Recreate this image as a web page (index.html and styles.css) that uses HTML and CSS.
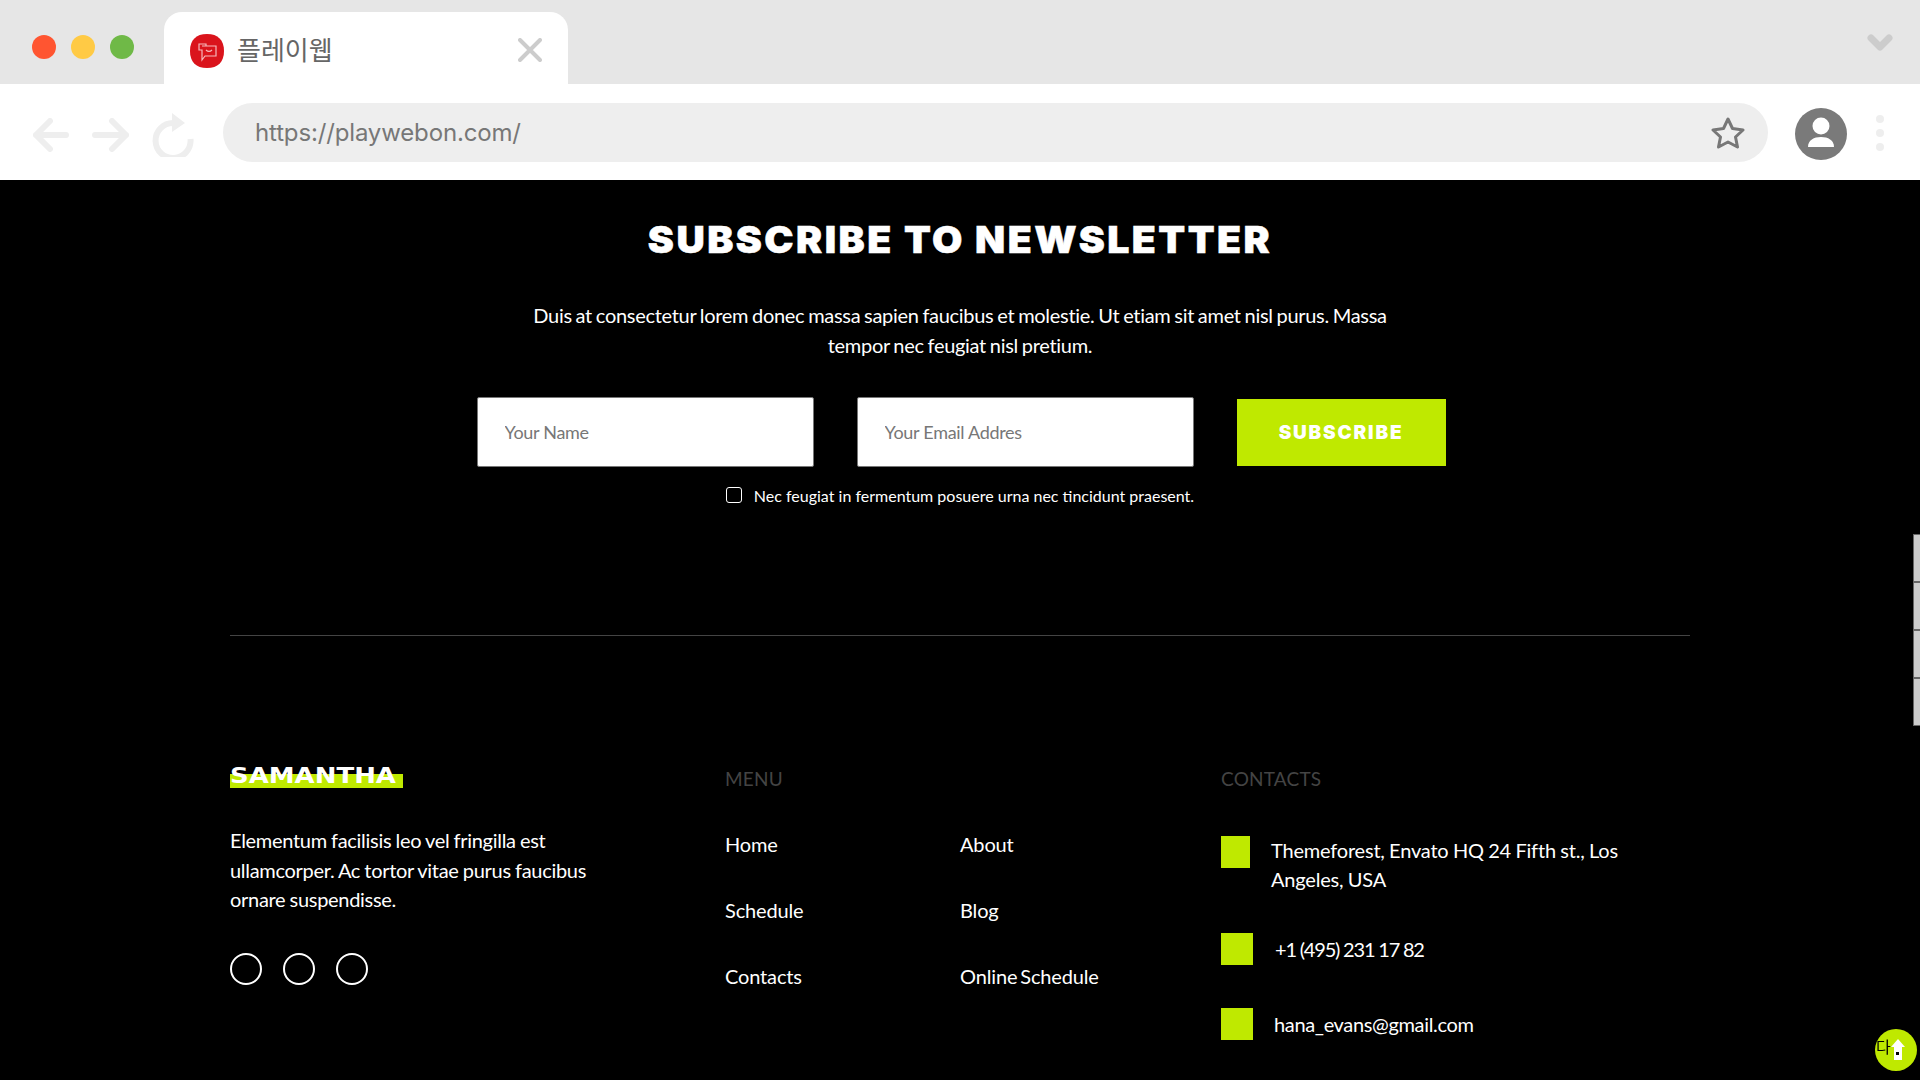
FILE: index.html
```html
<!DOCTYPE html>
<html lang="ko">
<head>
    <meta charset="UTF-8">
    <title>플레이웹</title>
    <link rel="stylesheet" href="styles.css">
</head>
<body>
    <header class="browser">
        <div class="tabstrip">
            <div class="lights">
                <span class="light red"></span>
                <span class="light yellow"></span>
                <span class="light green"></span>
            </div>
            <div class="tab">
                <svg class="favicon" width="34" height="34" viewBox="0 0 34 34">
                    <path d="M17 0C28 0 34 6 34 17S28 34 17 34 0 28 0 17 6 0 17 0Z" fill="#da141c"/>
                    <g fill="none" stroke="#f6b9bc" stroke-width="1.2">
                        <path d="M12 12H26V22H15L12 26V16H9V10H16V12"/>
                        <path d="M16 16Q19 19 22 16"/>
                    </g>
                </svg>
                <span class="tab-title">플레이웹</span>
                <svg class="tab-close" width="24" height="24" viewBox="0 0 24 24">
                    <path d="M2 2L22 22M22 2L2 22" stroke="#cccccc" stroke-width="4" stroke-linecap="round"/>
                </svg>
            </div>
            <svg class="tabs-more" width="26" height="18" viewBox="0 0 26 18">
                <path d="M4 4L13 13L22 4" fill="none" stroke="#cccccc" stroke-width="7" stroke-linecap="round" stroke-linejoin="round"/>
            </svg>
        </div>
        <div class="toolbar">
            <svg class="nav-back" width="36" height="34" viewBox="0 0 36 34">
                <path d="M17 3L3 17L17 31M3 17H33" fill="none" stroke="#eeeeee" stroke-width="6" stroke-linecap="round" stroke-linejoin="round"/>
            </svg>
            <svg class="nav-forward" width="37" height="34" viewBox="0 0 37 34">
                <path d="M20 3L34 17L20 31M34 17H3" fill="none" stroke="#eeeeee" stroke-width="6" stroke-linecap="round" stroke-linejoin="round"/>
            </svg>
            <svg class="nav-reload" width="42" height="44" viewBox="0 0 42 44">
                <path d="M21 10A17.500 17.500 0 1 0 38.500 26" fill="none" stroke="#eeeeee" stroke-width="6"/>
                <path d="M20 0L33 10L20 19Z" fill="#eeeeee"/>
            </svg>
            <div class="urlbar">
                <span class="url">https://playwebon.com/</span>
                <svg width="34" height="32" viewBox="0 0 34 32">
                    <path d="M17 2L21.500 11.500L32 13L24.500 20L26.500 30L17 25L7.500 30L9.500 20L2 13L12.500 11.500Z" fill="none" stroke="#777777" stroke-width="3" stroke-linejoin="round"/>
                </svg>
            </div>
            <svg class="avatar" width="52" height="52" viewBox="0 0 52 52">
                <circle cx="26" cy="26" r="26" fill="#7a7a7a"/>
                <circle cx="26" cy="18" r="8.500" fill="#ffffff"/>
                <path d="M13 39C13 32 19 29 26 29S39 32 39 39Z" fill="#ffffff"/>
            </svg>
            <div class="dots">
                <span></span>
                <span></span>
                <span></span>
            </div>
        </div>
    </header>

    <main class="page">
        <section class="newsletter">
            <h2>SUBSCRIBE TO NEWSLETTER</h2>
            <p class="intro">Duis at consectetur lorem donec massa sapien faucibus et molestie. Ut etiam sit amet nisl purus. Massa<br>tempor nec feugiat nisl pretium.</p>
            <form class="subscribe-form">
                <input type="text" placeholder="Your Name">
                <input type="text" placeholder="Your Email Addres">
                <button type="button">SUBSCRIBE</button>
            </form>
            <label class="agree">
                <span class="checkbox"></span>
                <span>Nec feugiat in fermentum posuere urna nec tincidunt praesent.</span>
            </label>
        </section>

        <hr class="divider">

        <footer class="footer">
            <div class="about">
                <div class="logo"><span>SAMANTHA</span></div>
                <p>Elementum facilisis leo vel fringilla est<br>ullamcorper. Ac tortor vitae purus faucibus<br>ornare suspendisse.</p>
                <div class="socials">
                    <span></span>
                    <span></span>
                    <span></span>
                </div>
            </div>
            <div class="menu">
                <h4>MENU</h4>
                <ul>
                    <li>Home</li>
                    <li>About</li>
                    <li>Schedule</li>
                    <li>Blog</li>
                    <li>Contacts</li>
                    <li>Online Schedule</li>
                </ul>
            </div>
            <div class="contacts">
                <h4>CONTACTS</h4>
                <div class="contact address">
                    <span class="marker narrow"></span>
                    <span>Themeforest, Envato HQ 24 Fifth st., Los<br>Angeles, USA</span>
                </div>
                <div class="contact phone">
                    <span class="marker"></span>
                    <span>+1 (495) 231 17 82</span>
                </div>
                <div class="contact mail">
                    <span class="marker"></span>
                    <span>hana_evans@gmail.com</span>
                </div>
            </div>
        </footer>
    </main>

    <div class="side-tabs">
        <span></span>
        <span></span>
        <span></span>
        <span></span>
    </div>

    <div class="to-top">
        <span class="to-top-text">다</span>
        <svg width="14" height="21" viewBox="0 0 14 21">
            <path d="M7 0L14 8H11V21H3V8H0Z" fill="#ffffff"/>
            <rect x="5" y="13" width="3" height="3" fill="#000000"/>
        </svg>
    </div>
</body>
</html>
```

FILE: styles.css
```css
* {
    box-sizing: border-box;
}
html, body {
    margin: 0;
    height: 1080px;
    overflow: hidden;
}
body {
    background: #000;
    color: #fff;
    font-family: "Lato", "Noto Sans CJK KR", sans-serif;
}

/* browser frame */
.browser {
    height: 180px;
    background: #fff;
}
.tabstrip {
    height: 84px;
    background: #e6e6e6;
    display: flex;
    align-items: flex-end;
    position: relative;
}
.lights {
    display: flex;
    gap: 15px;
    padding: 0 0 25px 32px;
    width: 164px;
}
.light {
    width: 24px;
    height: 24px;
    border-radius: 50%;
}
.red { background: #ff5531; }
.yellow { background: #ffca45; }
.green { background: #6fb947; }
.tab {
    width: 404px;
    height: 72px;
    background: #fff;
    border-radius: 18px 18px 0 0;
    display: flex;
    align-items: center;
    padding: 0 26px 0 26px;
}
.favicon {
    margin: 6px 13px 0 0;
}
.tab-title {
    font-family: "Noto Sans CJK KR", sans-serif;
    font-size: 26px;
    color: #666;
    flex: 1;
}
.tab-close {
    margin-top: 3px;
}
.tabs-more {
    position: absolute;
    right: 27px;
    top: 34px;
}
.toolbar {
    height: 96px;
    display: flex;
    align-items: center;
    padding-left: 33px;
}
.nav-back {
    margin-top: 6px;
}
.nav-forward {
    margin: 6px 0 0 23px;
}
.nav-reload {
    margin: 6px 0 0 23px;
}
.urlbar {
    width: 1545px;
    height: 59px;
    margin: 1px 0 0 29px;
    background: #eee;
    border-radius: 30px;
    display: flex;
    align-items: center;
    justify-content: space-between;
    padding: 0 23px 0 32px;
}
.url {
    font-family: "Inter", sans-serif;
    font-size: 24px;
    letter-spacing: -0.15px;
    color: #777;
}
.avatar {
    margin: 4px 0 0 27px;
}
.dots {
    display: flex;
    flex-direction: column;
    gap: 6px;
    margin: 2px 0 0 29px;
}
.dots span {
    width: 8px;
    height: 8px;
    border-radius: 50%;
    background: #eee;
}

/* newsletter */
.page {
    width: 1460px;
    margin: 0 auto;
}
.newsletter {
    text-align: center;
    padding-top: 38px;
}
.newsletter h2 {
    margin: 0;
    font-family: "Inter", sans-serif;
    font-weight: 900;
    font-size: 37px;
    line-height: 44px;
    letter-spacing: 2.3px;
    transform: scaleX(1.06);
    -webkit-text-stroke: 0.5px #fff;
}
.intro {
    margin: 38px 0 0;
    font-size: 20px;
    line-height: 30px;
    letter-spacing: -0.3px;
    word-spacing: -1px;
}
.subscribe-form {
    display: flex;
    align-items: center;
    justify-content: center;
    gap: 43px;
    margin-top: 37px;
    padding-left: 2px;
}
.subscribe-form input {
    width: 337px;
    height: 70px;
    padding: 0 27px;
    border: 1px solid #777;
    border-radius: 2px;
    background: #fff;
    font-family: "Lato", sans-serif;
    font-size: 18px;
    letter-spacing: -0.3px;
}
.subscribe-form input::placeholder {
    color: #777;
    opacity: 1;
}
.subscribe-form button {
    width: 209px;
    height: 67px;
    border: 0;
    background: #bfe900;
    color: #fff;
    font-family: "Inter", sans-serif;
    font-weight: 900;
    font-size: 19px;
    letter-spacing: 1.8px;
}
.agree {
    display: flex;
    align-items: center;
    justify-content: center;
    gap: 12px;
    height: 24px;
    margin-top: 16px;
    font-size: 16px;
}
.checkbox {
    width: 16px;
    height: 16px;
    border: 1.5px solid #fff;
    border-radius: 3px;
}
.divider {
    height: 1px;
    margin: 128px 0 0;
    border: 0;
    background: #444;
}

/* footer */
.footer {
    display: grid;
    grid-template-columns: 495px 496px 1fr;
    padding-top: 129px;
}
.footer h4 {
    margin: 0;
    font-weight: 400;
    font-size: 19px;
    line-height: 28px;
    letter-spacing: 0.2px;
    color: #444;
}
.logo {
    width: 173px;
    height: 22px;
    margin-top: 1px;
    background: linear-gradient(#000 8px, #bfe900 8px);
}
.logo span {
    display: block;
    transform: scaleX(1.18);
    transform-origin: left top;
    font-family: "DejaVu Sans", sans-serif;
    font-weight: 700;
    font-size: 22px;
    line-height: 20px;
}
.about p {
    margin: 38px 0 0;
    font-size: 20px;
    line-height: 29.5px;
    letter-spacing: -0.3px;
    word-spacing: -0.6px;
}
.socials {
    display: flex;
    gap: 21px;
    margin-top: 38px;
}
.socials span {
    width: 32px;
    height: 32px;
    border: 2px solid #fff;
    border-radius: 50%;
}
.menu ul {
    display: grid;
    grid-template-columns: 235px 1fr;
    row-gap: 36px;
    margin: 36px 0 0;
    padding: 0;
    list-style: none;
    font-size: 20px;
    line-height: 30px;
    letter-spacing: -0.15px;
    word-spacing: -2px;
}
.contact {
    display: flex;
    align-items: flex-start;
    font-size: 20px;
    line-height: 28.5px;
}
.marker {
    flex: none;
    width: 32px;
    height: 32px;
    background: #bfe900;
}
.marker.narrow {
    width: 29px;
}
.address {
    margin-top: 43px;
    gap: 21px;
    letter-spacing: -0.2px;
    word-spacing: -0.5px;
}
.phone {
    margin-top: 40px;
    gap: 22px;
    align-items: center;
    letter-spacing: -1.2px;
}
.mail {
    margin-top: 43px;
    gap: 21px;
    align-items: center;
    letter-spacing: -0.35px;
}

/* things on the page edge */
.side-tabs {
    position: fixed;
    top: 534px;
    right: 0;
    width: 7px;
}
.side-tabs span {
    display: block;
    height: 48px;
    background: #ccc;
    border: 1px solid #666;
    border-right: 0;
}
.to-top {
    position: fixed;
    left: 1875px;
    top: 1029px;
    width: 42px;
    height: 42px;
    border-radius: 50%;
    background: #bfe900;
}
.to-top-text {
    position: absolute;
    left: 1px;
    top: 6px;
    color: #000;
    font-family: "Noto Sans CJK KR", sans-serif;
    font-size: 16px;
    line-height: 22px;
}
.to-top svg {
    position: absolute;
    left: 16px;
    top: 10px;
}
```
